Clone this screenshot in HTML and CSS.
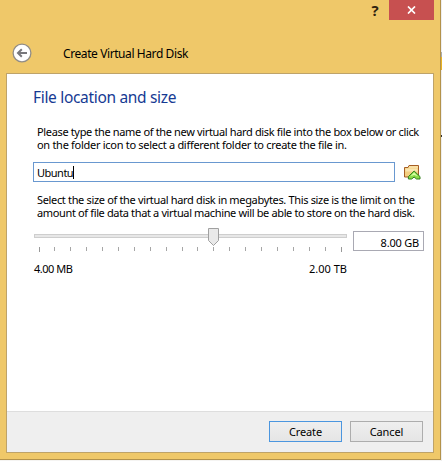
FILE: index.html
```
<!DOCTYPE html>
<html lang="en">
<head>
<meta charset="utf-8">
<title>Create Virtual Hard Disk</title>
<link rel="stylesheet" href="styles.css">
</head>
<body>
<div class="desktop">
<div class="window">
  <header class="titlebar">
    <div class="controls">
      <span class="help">?</span>
      <span class="close"><svg width="9" height="8" viewBox="0 0 9 8"><path d="M1 .5L8 7.5M8 .5L1 7.5" stroke="#fff" stroke-width="1.7"/></svg></span>
    </div>
    <div class="caption">
      <svg width="20" height="20" viewBox="0 0 20 20"><circle cx="10" cy="10" r="8.9" fill="#fff" stroke="#918d87" stroke-width="1.3"/><path d="M5.8 10H15M9.8 6.3L6 10l3.8 3.7" fill="none" stroke="#77777b" stroke-width="2"/></svg>
      <span class="name">Create Virtual Hard Disk</span>
    </div>
  </header>
  <main class="client">
    <section class="content">
      <h1>File location and size</h1>
      <p><span class="l1">Please type the name of the new virtual hard disk file into the box below or click</span><br><span class="l2">on the folder icon to select a different folder to create the file in.</span></p>
      <div class="file-row">
        <div class="field"><span>Ubuntu</span><i class="caret"></i></div>
        <svg width="18" height="17" viewBox="0 0 18 17">
          <path d="M1.500 3.500H5L6 1.500h9.500V13H1.500z" fill="#f4cf80" stroke="#a65e25"/>
          <path d="M6 2.500h9v1H6z" fill="#fff0c9"/>
          <path d="M2.500 4.500h12v3h-12z" fill="#fbe5ae"/>
          <path d="M11.100 7L17 12.600V15h-3.500l-2.400-2-2.400 2H5.400v-2.400z" fill="#8cdc48" stroke="#34801f"/>
          <path d="M11.100 8.600l-3.700 3.700 3.700-1.400 3.700 1.400z" fill="#d5ffa4"/>
        </svg>
      </div>
      <p class="size-text"><span class="l3">Select the size of the virtual hard disk in megabytes. This size is the limit on the</span><br><span class="l4">amount of file data that a virtual machine will be able to store on the hard disk.</span></p>
      <div class="size-row">
        <div class="slider">
          <svg width="314" height="30" viewBox="0 0 314 30">
            <rect x=".5" y="6.500" width="312" height="3" fill="#e7e7e7" stroke="#cecece"/>
            <path d="M174.500 .5h10v12l-5 5-5-5z" fill="#e9e9e9" stroke="#a0a0a0"/>
            <path d="M5.500 19v5M307.500 19v5" stroke="#999"/>
            <path d="M20.500 19v4M36.500 19v4M52.500 19v4M68.500 19v4M84.500 19v4M100.500 19v4M116.500 19v4M132.500 19v4M148.500 19v4M163.500 19v4M179.500 19v4M195.500 19v4M211.500 19v4M227.500 19v4M243.500 19v4M259.500 19v4M275.500 19v4M291.500 19v4" stroke="#a6a6a6"/>
          </svg>
          <div class="range"><span class="min">4.00 MB</span><span class="max">2.00 TB</span></div>
        </div>
        <div class="size-field">8.00 GB</div>
      </div>
    </section>
    <footer><div class="btn primary">Create</div><div class="btn">Cancel</div></footer>
  </main>
</div>
<div class="behind"></div>
</div>
</body>
</html>
```
FILE: styles.css
```
* { box-sizing: border-box; }
body { margin: 0; background: #f5f4f2; font: 11px/13px "Noto Sans", sans-serif; color: #000; }
.desktop { display: flex; width: 442px; height: 461px; overflow: hidden; }
.window { width: 441px; height: 460px; flex: none; background: #efc869; border: solid #b3924a; border-width: 0 1px 1px 0; padding: 0 6px 6px; }
.behind { width: 1px; height: 461px; background: linear-gradient(#eeeef0 52px, #aaa 52px 57px, #eab323 57px 70px, #eee 70px 135px, #333 135px 137px, #eee 137px); }
.titlebar { height: 73px; }
.controls { display: flex; justify-content: flex-end; height: 20px; }
.help { width: 28px; text-align: center; font: bold 15px/20px "Open Sans", sans-serif; color: #30230f; }
.close { display: flex; width: 45px; height: 20px; background: #c75050; align-items: center; justify-content: center; }
.caption { display: flex; align-items: center; gap: 31px; padding: 23px 0 0 6px; }
.name { font-size: 12px; letter-spacing: -.41px; white-space: nowrap; }
.client { display: flex; flex-direction: column; width: 428px; height: 380px; border: 1px solid #bea369; background: #fff; }
.content { flex: 1; padding: 13px 0 0 26px; white-space: nowrap; }
h1 { margin: 0; font: 15.5px/20px "Noto Sans", sans-serif; letter-spacing: -.32px; color: #163a93; }
p { margin: 18px 0 0 4px; }
.l1 { letter-spacing: -.35px; }
.l2 { letter-spacing: -.29px; }
.l3 { letter-spacing: -.34px; }
.l4 { letter-spacing: -.36px; }
.file-row { display: flex; align-items: center; gap: 8px; margin-top: 11px; }
.field { display: flex; align-items: center; width: 362px; height: 20px; border: 1px solid #6998d0; padding: 0 0 0 3px; letter-spacing: -.5px; }
.caret { width: 1px; height: 13px; background: #000; }
.size-text { margin-top: 11px; }
.size-row { display: flex; gap: 5px; margin: 9px 0 0 1px; }
.slider { width: 314px; }
.slider svg { display: block; }
.range { display: flex; justify-content: space-between; margin-top: 4px; padding-right: 1px; }
.min { letter-spacing: -.5px; }
.size-field { width: 71px; height: 20px; margin-top: 3px; border: 1px solid #a9a9b3; text-align: right; padding: 4px 4px 0 0; letter-spacing: -.2px; }
footer { display: flex; height: 41px; border-top: 1px solid #dedede; background: #efefef; justify-content: flex-end; gap: 8px; padding: 9px 10px 0 0; }
.btn { width: 73px; height: 21px; border: 1px solid #adadad; background: linear-gradient(#efefef, #e5e5e5); text-align: center; line-height: 20px; letter-spacing: -.1px; }
.btn.primary { border-color: #4b96df; }
```
